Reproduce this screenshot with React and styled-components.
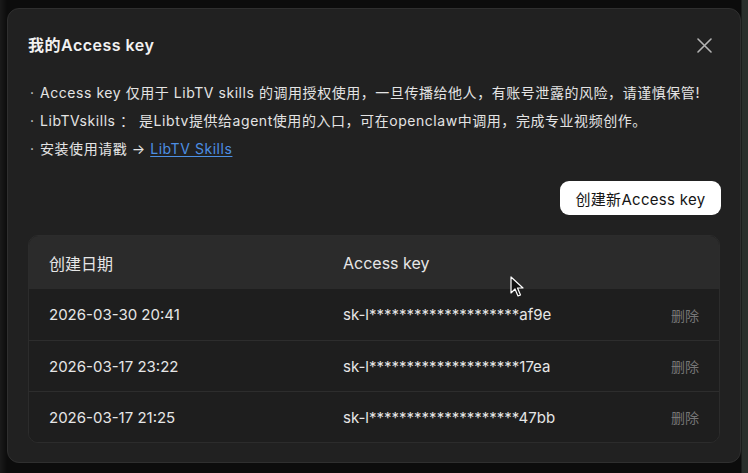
import React from "react";
import styled, { createGlobalStyle } from "styled-components";

const Global = createGlobalStyle`
  html, body { margin: 0; padding: 0; background: #0c0c0c; }
  body {
    width: 748px; height: 473px; overflow: hidden;
    font-family: Inter, "Noto Sans CJK SC", sans-serif;
    -webkit-font-smoothing: antialiased;
  }
`;

const Page = styled.div`
  position: relative;
  width: 748px;
  height: 473px;
  padding: 8px 7px 10px 7px;
  box-sizing: border-box;
  background: linear-gradient(90deg, #1a1a1a 0px, #0c0c0c 7px, #0c0c0c 741px, #2a2f2c 742px);
`;

const Modal = styled.div`
  height: 455px;
  box-sizing: border-box;
  background: #212121;
  border: 1px solid #2f2f2f;
  border-radius: 12px;
  padding: 25px 19px 19px 20px;
  display: flex;
  flex-direction: column;
`;

const Header = styled.div`
  display: flex;
  align-items: center;
  justify-content: space-between;
  height: 22px;
`;

const Title = styled.h2`
  margin: 0;
  font-size: 16px;
  font-weight: 600;
  letter-spacing: 0.5px;
  color: #f2f2f2;
  line-height: 22px;
`;

const Close = styled.button`
  background: none;
  border: none;
  padding: 0;
  margin-right: 9px;
  width: 16px;
  height: 16px;
  display: flex;
  align-items: center;
  justify-content: center;
  cursor: pointer;
`;

const Notes = styled.ul`
  list-style: none;
  margin: 23px 0 0 0;
  padding: 0;
`;

const Note = styled.li`
  font-size: 14px;
  line-height: 28px;
  letter-spacing: 0.55px;
  color: #e4e4e4;
  white-space: nowrap;
  display: flex;
  &::before {
    content: "·";
    width: 10px;
    margin-left: 2px;
    color: #cfcfcf;
  }
`;

const Link = styled.a`
  color: #4d8fe3;
  text-decoration: underline;
  text-underline-offset: 2px;
`;

const Actions = styled.div`
  display: flex;
  justify-content: flex-end;
  margin-top: 18px;
`;

const PrimaryButton = styled.button`
  width: 161px;
  height: 34px;
  border: none;
  border-radius: 9px;
  background: #ffffff;
  color: #151515;
  font-family: inherit;
  font-size: 15px;
  letter-spacing: 0.3px;
  padding: 0;
`;

const Table = styled.div`
  margin-top: 20px;
  border: 1px solid #2c2c2c;
  border-radius: 10px;
  overflow: hidden;
  background: #1e1e1e;
  margin-right: 1px;
`;

const Row = styled.div`
  display: grid;
  grid-template-columns: 294px 1fr auto;
  align-items: center;
  height: ${(p) => (p.$head ? "53px" : "51px")};
  padding: 0 20px;
  background: ${(p) => (p.$head ? "#2b2b2b" : "#1e1e1e")};
  border-top: ${(p) => (p.$first || p.$head ? "none" : "1px solid #2d2d2d")};
  box-sizing: border-box;
  font-size: ${(p) => (p.$head ? "16px" : "15px")};
  color: #e6e6e6;
`;

const Cell = styled.span`
  white-space: nowrap;
`;

const Delete = styled.button`
  background: none;
  border: none;
  padding: 0;
  font-family: inherit;
  font-size: 14px;
  color: #767676;
`;

const Cursor = styled.svg`
  position: absolute;
  left: 510px;
  top: 276px;
`;

const rows = [
  ["2026-03-30 20:41", "sk-l********************af9e"],
  ["2026-03-17 23:22", "sk-l********************17ea"],
  ["2026-03-17 21:25", "sk-l********************47bb"],
];

export default function App() {
  return (
    <>
      <Global />
      <Page>
        <Modal>
          <Header>
            <Title>我的Access key</Title>
            <Close aria-label="关闭">
              <svg width="15" height="15" viewBox="0 0 15 15">
                <path d="M1 1L14 14M14 1L1 14" stroke="#b4b4b4" strokeWidth="1.6" strokeLinecap="round" />
              </svg>
            </Close>
          </Header>
          <Notes>
            <Note>Access key 仅用于 LibTV skills 的调用授权使用，一旦传播给他人，有账号泄露的风险，请谨慎保管!</Note>
            <Note>LibTVskills ： 是Libtv提供给agent使用的入口，可在openclaw中调用，完成专业视频创作。</Note>
            <Note>
              安装使用请戳 →&nbsp;<Link href="#">LibTV Skills</Link>
            </Note>
          </Notes>
          <Actions>
            <PrimaryButton>创建新Access key</PrimaryButton>
          </Actions>
          <Table>
            <Row $head>
              <Cell>创建日期</Cell>
              <Cell>Access key</Cell>
              <Cell />
            </Row>
            {rows.map(([d, k], i) => (
              <Row key={k} $first={i === 0}>
                <Cell>{d}</Cell>
                <Cell>{k}</Cell>
                <Delete>删除</Delete>
              </Row>
            ))}
          </Table>
        </Modal>
        <Cursor width="14" height="22" viewBox="0 0 14 22">
          <path d="M1 1 L1 17 L5 13 L8 20 L10.5 19 L7.5 12 L13 12 Z" fill="#111" stroke="#fff" strokeWidth="1.2" strokeLinejoin="round" />
        </Cursor>
      </Page>
    </>
  );
}
